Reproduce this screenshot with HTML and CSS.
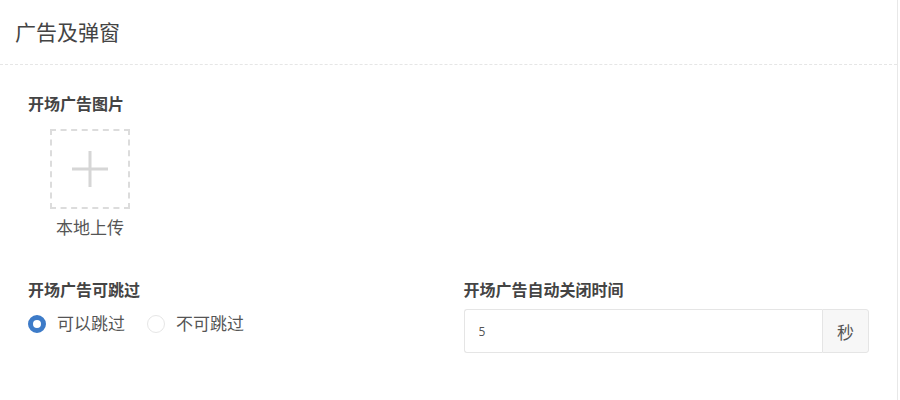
FILE: index.html
```html
<!DOCTYPE html>
<html lang="zh-CN">
<head>
    <meta charset="UTF-8">
    <title>广告及弹窗</title>
    <link rel="stylesheet" href="styles.css">
</head>
<body>
    <div class="panel">
        <div class="panel-heading">广告及弹窗</div>
        <div class="panel-body">
            <div class="form-group">
                <label class="form-label">开场广告图片</label>
                <div class="upload">
                    <div class="upload-box">
                        <svg width="36" height="36" viewBox="0 0 36 36">
                            <rect x="16.5" y="0" width="3" height="36" fill="#d6d6d6"/>
                            <rect x="0" y="16.5" width="36" height="3" fill="#d6d6d6"/>
                        </svg>
                    </div>
                    <div class="upload-text">本地上传</div>
                </div>
            </div>
            <div class="form-row">
                <div class="form-group">
                    <label class="form-label">开场广告可跳过</label>
                    <div class="radio-list">
                        <label class="radio checked"><span class="radio-dot"></span>可以跳过</label>
                        <label class="radio"><span class="radio-dot"></span>不可跳过</label>
                    </div>
                </div>
                <div class="form-group">
                    <label class="form-label">开场广告自动关闭时间</label>
                    <div class="input-group">
                        <input class="input" type="text" value="5">
                        <span class="input-addon">秒</span>
                    </div>
                </div>
            </div>
        </div>
    </div>
</body>
</html>
```

FILE: styles.css
```css
/* ==================================== */
/* 基本样式 */
/* ==================================== */
body {
    margin: 0;
    padding: 0;
    background-color: #fff;
    font-family: "Open Sans", "Noto Sans CJK SC", sans-serif;
    color: #555;
}

/* ==================================== */
/* 面板 */
/* ==================================== */
.panel {
    width: 898px;
    height: 400px;
    border-right: 1px solid #e8e8e8;
    box-sizing: border-box;
}

.panel-heading {
    height: 65px;
    padding-left: 15px;
    line-height: 64px;
    font-size: 21px;
    color: #444;
    border-bottom: 1px dashed #e6e6e6;
    box-sizing: border-box;
}

.panel-body {
    padding: 27px 28px 0 28px;
}

/* ==================================== */
/* 表单 */
/* ==================================== */
.form-label {
    display: block;
    font-size: 16px;
    font-weight: bold;
    color: #444;
    line-height: 24px;
}

.upload {
    width: 80px;
    margin: 13px 0 0 22px;
}

.upload-box {
    width: 80px;
    height: 80px;
    border: 2px dashed #dcdcdc;
    box-sizing: border-box;
    display: flex;
    align-items: center;
    justify-content: center;
}

.upload-text {
    margin-top: 7px;
    margin-left: -5px;
    width: 90px;
    text-align: center;
    font-size: 17px;
    line-height: 24px;
    color: #555;
    white-space: nowrap;
}

.form-row {
    display: grid;
    grid-template-columns: 1fr 1fr;
    column-gap: 30px;
    margin-top: 38px;
}

/* 单选 */
.radio-list {
    display: flex;
    gap: 22px;
    margin-top: 10px;
}

.radio {
    display: flex;
    align-items: center;
    gap: 11px;
    font-size: 17px;
    color: #555;
    line-height: 24px;
}

.radio-dot {
    width: 18px;
    height: 18px;
    border-radius: 50%;
    border: 1px solid #e6e6e6;
    box-sizing: border-box;
    background-color: #fff;
}

.radio.checked .radio-dot {
    border: 5px solid #3d7bc8;
    background-color: #fff;
}

/* 输入框 */
.input-group {
    display: flex;
    margin-top: 7px;
    height: 44px;
}

.input {
    flex: 1;
    min-width: 0;
    border: 1px solid #e5e5e5;
    border-right: none;
    border-radius: 3px 0 0 3px;
    padding: 0 14px;
    font-size: 12px;
    color: #555;
    font-family: "Open Sans", sans-serif;
    outline: none;
}

.input-addon {
    width: 45px;
    border: 1px solid #e5e5e5;
    border-radius: 0 3px 3px 0;
    background-color: #f7f7f7;
    display: flex;
    align-items: center;
    justify-content: center;
    font-size: 17px;
    color: #555;
}
```
